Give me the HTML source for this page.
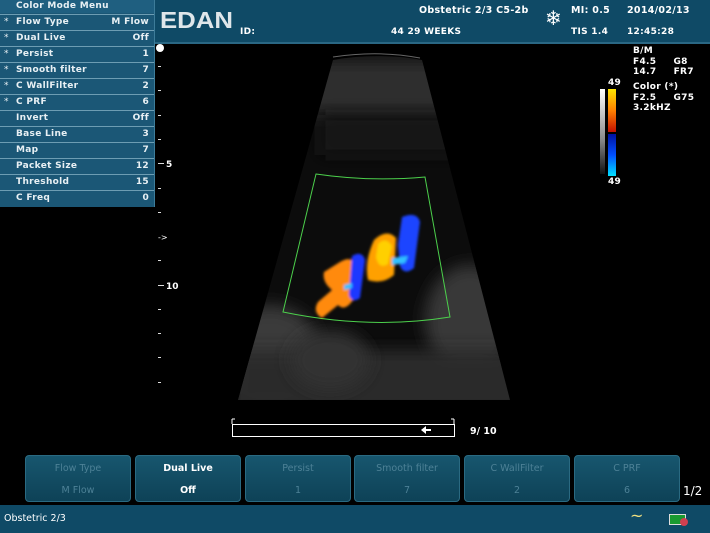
<!DOCTYPE html>
<html><head><meta charset="utf-8"><style>
body{margin:0;width:710px;height:533px;background:#000;position:relative;overflow:hidden;font-family:"DejaVu Sans","Liberation Sans",sans-serif;color:#fff}
.a{position:absolute;white-space:nowrap}
#menu{position:absolute;left:0;top:0;width:154px;height:207px;background:#1b5776;border-right:1px solid #3d7c99}
.r{position:absolute;left:0;width:154px;height:15px;border-top:1px solid #6d9db3;font-size:9px;font-weight:bold;line-height:15px;color:#e8f0f4;letter-spacing:0.3px}
.r .s{position:absolute;left:4px;font-weight:normal}.r .n{position:absolute;left:16px}.r .v{position:absolute;right:5px}
.b{position:absolute;top:455px;width:104px;height:45px;background:linear-gradient(#17566e,#0e4257);border:1px solid #2a6a82;border-radius:4px;font-size:9.5px;color:#4d8196;text-align:center}
.b div{height:19px;line-height:19px;margin-top:3px}
.h{font-weight:bold;letter-spacing:0.3px}
</style></head><body>
<div class="a" style="left:155px;top:0;width:555px;height:42px;background:#0f4a66;border-bottom:2px solid #2a6784"></div>
<div class="a" style="left:160px;top:7px;font-size:23px;font-weight:bold;color:#dfe6ea;transform:scaleX(1.12);transform-origin:left;font-family:'Liberation Sans',sans-serif">EDAN</div>
<div class="a h" style="left:240px;top:27px;font-size:9px">ID:</div>
<div class="a h" style="left:419px;top:5px;font-size:9.5px">Obstetric 2/3 C5-2b</div>
<div class="a h" style="left:391px;top:27px;font-size:9px">44 29 WEEKS</div>
<div class="a" style="left:545px;top:8px;font-size:20px;line-height:20px">❄</div>
<div class="a h" style="left:571px;top:5px;font-size:9.5px">MI: 0.5</div>
<div class="a h" style="left:571px;top:27px;font-size:9px">TIS 1.4</div>
<div class="a h" style="left:627px;top:5px;font-size:9.5px">2014/02/13</div>
<div class="a h" style="left:627px;top:27px;font-size:9px">12:45:28</div>
<div class="a h" style="left:633px;top:46px;font-size:9px;line-height:10.5px">B/M<br>F4.5&nbsp;&nbsp;&nbsp;&nbsp;&nbsp;G8<br>14.7&nbsp;&nbsp;&nbsp;&nbsp;&nbsp;FR7</div>
<div class="a h" style="left:633px;top:82px;font-size:9px;line-height:10.5px">Color (*)<br>F2.5&nbsp;&nbsp;&nbsp;&nbsp;&nbsp;G75<br>3.2kHZ</div>
<div class="a h" style="left:608px;top:78px;font-size:9px">49</div>
<div class="a h" style="left:608px;top:177px;font-size:9px">49</div>
<div class="a" style="left:600px;top:89px;width:5px;height:85px;background:linear-gradient(#fff,#888 60%,#111)"></div>
<div class="a" style="left:608px;top:89px;width:8px;height:43px;background:linear-gradient(#ffe600,#ff8000 50%,#c01000)"></div>
<div class="a" style="left:608px;top:134px;width:8px;height:42px;background:linear-gradient(#0010a0,#0050ff 50%,#00e0ff)"></div>

<svg class="a" style="left:0;top:0" width="710" height="533">
<defs>
<filter id="bl" x="-50%" y="-50%" width="200%" height="200%"><feGaussianBlur stdDeviation="8"/></filter>
<filter id="bl2" x="-20%" y="-20%" width="140%" height="140%"><feGaussianBlur stdDeviation="1.2"/></filter>
<clipPath id="fan"><path d="M333,60 Q378,52 422,60 L510,400 L238,400 Z"/></clipPath>
</defs>
<g clip-path="url(#fan)">
<rect x="230" y="50" width="290" height="360" fill="#0c0c0c"/>
<rect x="300" y="60" width="160" height="55" fill="#2e2e2e" filter="url(#bl)"/>
<rect x="320" y="115" width="140" height="40" fill="#181818" filter="url(#bl)"/>
<ellipse cx="270" cy="350" rx="50" ry="45" fill="#3a3a3a" filter="url(#bl)"/>
<ellipse cx="470" cy="320" rx="45" ry="55" fill="#383838" filter="url(#bl)"/>
<rect x="230" y="350" width="290" height="60" fill="#2a2a2a" filter="url(#bl)"/>
<ellipse cx="330" cy="360" rx="40" ry="30" fill="#333" filter="url(#bl)"/>
</g>
<path d="M333,57 Q378,50 420,58" stroke="#666" fill="none"/>
<path d="M316,174 Q370,182 425,177 L450,317 Q370,330 283,312 Z" stroke="#4cd04c" stroke-width="1" fill="none"/>
<g filter="url(#bl2)">
<path d="M340,262 Q352,255 355,265 L353,300 Q345,312 338,305 L322,318 Q312,312 318,302 L332,290 Q322,282 324,272 Z" fill="#ff8a10"/>
<path d="M352,256 Q362,250 365,260 L360,298 Q352,304 349,295 Z" fill="#1a38ff"/>
<path d="M374,240 Q387,228 396,238 L394,275 Q382,285 368,280 Q364,262 374,240 Z" fill="#ffa000"/>
<path d="M378,244 Q386,236 392,246 L388,264 Q379,270 376,257 Z" fill="#ffd000"/>
<path d="M402,217 Q417,211 420,222 L414,268 Q404,276 400,266 L398,245 Z" fill="#1a44ff"/>
<path d="M392,258 L408,256 L405,263 L392,265 Z" fill="#30c0ff"/>
<path d="M344,285 L352,283 L352,288 L344,290Z" fill="#30c0ff"/>
</g>
<circle cx="160" cy="48" r="4" fill="#fff"/>
<g fill="#ddd">
<rect x="158" y="66" width="3" height="1"/><rect x="158" y="90" width="3" height="1"/><rect x="158" y="115" width="3" height="1"/><rect x="158" y="139" width="3" height="1"/>
<rect x="158" y="163" width="6" height="1"/><rect x="158" y="188" width="3" height="1"/><rect x="158" y="212" width="3" height="1"/>
<rect x="158" y="260" width="3" height="1"/><rect x="158" y="285" width="6" height="1"/><rect x="158" y="309" width="3" height="1"/>
<rect x="158" y="333" width="3" height="1"/><rect x="158" y="357" width="3" height="1"/><rect x="158" y="382" width="3" height="1"/>
</g>
<text x="166" y="167" font-size="9" font-weight="bold" fill="#fff" font-family="DejaVu Sans">5</text>
<text x="166" y="289" font-size="9" font-weight="bold" fill="#fff" font-family="DejaVu Sans">10</text>
<text x="158" y="240" font-size="8" fill="#fff" font-family="DejaVu Sans">-&gt;</text>
<path d="M232,424 V419 M454,424 V419 M232,419 H235 M454,419 H451" stroke="#fff"/>
<rect x="232.5" y="424.5" width="222" height="12" fill="none" stroke="#fff"/>
<path d="M421,430 L426,426 L426,434 Z M426,429 H431 V431 H426 Z" fill="#fff"/>
<text x="470" y="434" font-size="9.5" font-weight="bold" fill="#fff" font-family="DejaVu Sans">9/ 10</text>
</svg>

<div id="menu">
<div class="r" style="top:-1px;border-top:none;background:#1f5f80;height:14px;line-height:14px"><span class="n" style="left:16px">Color Mode Menu</span></div>
<div class="r" style="top:14px"><span class="s">*</span><span class="n">Flow Type</span><span class="v">M Flow</span></div>
<div class="r" style="top:30px"><span class="s">*</span><span class="n">Dual Live</span><span class="v">Off</span></div>
<div class="r" style="top:46px"><span class="s">*</span><span class="n">Persist</span><span class="v">1</span></div>
<div class="r" style="top:62px"><span class="s">*</span><span class="n">Smooth filter</span><span class="v">7</span></div>
<div class="r" style="top:78px"><span class="s">*</span><span class="n">C WallFilter</span><span class="v">2</span></div>
<div class="r" style="top:94px"><span class="s">*</span><span class="n">C PRF</span><span class="v">6</span></div>
<div class="r" style="top:110px"><span class="n">Invert</span><span class="v">Off</span></div>
<div class="r" style="top:126px"><span class="n">Base Line</span><span class="v">3</span></div>
<div class="r" style="top:142px"><span class="n">Map</span><span class="v">7</span></div>
<div class="r" style="top:158px"><span class="n">Packet Size</span><span class="v">12</span></div>
<div class="r" style="top:174px"><span class="n">Threshold</span><span class="v">15</span></div>
<div class="r" style="top:190px"><span class="n">C Freq</span><span class="v">0</span></div>
</div>

<div class="b" style="left:25px"><div>Flow Type</div><div>M Flow</div></div>
<div class="b" style="left:135px;color:#fff;font-weight:bold"><div>Dual Live</div><div>Off</div></div>
<div class="b" style="left:245px"><div>Persist</div><div>1</div></div>
<div class="b" style="left:354px"><div>Smooth filter</div><div>7</div></div>
<div class="b" style="left:464px"><div>C WallFilter</div><div>2</div></div>
<div class="b" style="left:574px"><div>C PRF</div><div>6</div></div>
<div class="a" style="left:683px;top:484px;font-size:12px">1/2</div>
<div class="a" style="left:0;top:505px;width:710px;height:28px;background:#0f4a66"></div>
<div class="a" style="left:4px;top:513px;font-size:9.5px">Obstetric 2/3</div>
<div class="a" style="left:630px;top:506px;font-size:16px;color:#f0e080">~</div>
<div class="a" style="left:669px;top:514px;width:15px;height:9px;background:#1a9a30;border:1px solid #ddd"></div>
<div class="a" style="left:680px;top:518px;width:8px;height:8px;border-radius:50%;background:#d04050"></div>
</body></html>
